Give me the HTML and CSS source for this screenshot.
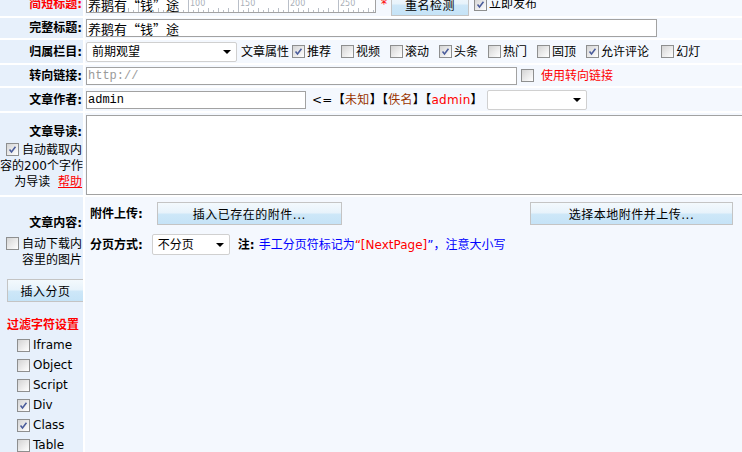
FILE: index.html
```html
<!DOCTYPE html>
<html lang="zh-CN">
<head>
<meta charset="utf-8">
<title>文章编辑</title>
<link rel="stylesheet" href="styles.css">
</head>
<body>
<div class="form">
  <div class="row row-1">
    <div class="lab red">简短标题:</div>
    <div class="val">
      <div class="ruler-wrap">
        <svg class="ruler" width="288" height="17" viewBox="0 0 288 17">
          <g stroke="#b9bfc8" stroke-width="1">
            <path d="M11.5 13v4M21.5 13v4M31.5 13v4M41.5 13v4M61.5 13v4M71.5 13v4M81.5 13v4M91.5 13v4M111.5 13v4M121.5 13v4M131.5 13v4M141.5 13v4M161.5 13v4M171.5 13v4M181.5 13v4M191.5 13v4M211.5 13v4M221.5 13v4M231.5 13v4M241.5 13v4M261.5 13v4M271.5 13v4M281.5 13v4"/>
            <path d="M6.5 15v2M16.5 15v2M26.5 15v2M36.5 15v2M46.5 15v2M56.5 15v2M66.5 15v2M76.5 15v2M86.5 15v2M96.5 15v2M106.5 15v2M116.5 15v2M126.5 15v2M136.5 15v2M146.5 15v2M156.5 15v2M166.5 15v2M176.5 15v2M186.5 15v2M196.5 15v2M206.5 15v2M216.5 15v2M226.5 15v2M236.5 15v2M246.5 15v2M256.5 15v2M266.5 15v2M276.5 15v2M286.5 15v2"/>
            <path d="M51.5 4v13M101.5 0v17M151.5 0v17M201.5 0v17M251.5 0v17"/>
          </g>
          <g fill="#a9afb8" font-family="DejaVu Sans, sans-serif" font-size="8">
            <text x="103" y="11">100</text>
            <text x="153" y="11">150</text>
            <text x="203" y="11">200</text>
            <text x="253" y="11">250</text>
          </g>
        </svg>
        <input class="txt big ruler-input" type="text" value="养鹅有“钱”途">
      </div>
      <span class="star">*</span>
      <button class="btn btn-check">重名检测</button>
      <span class="cb on ml5"><svg viewBox="0 0 13 13"><path d="M3 6.5l2.3 3L10 3.2"/></svg></span>
      <span class="ml2">立即发布</span>
    </div>
  </div>

  <div class="row row-2">
    <div class="lab">完整标题:</div>
    <div class="val">
      <input class="txt big w-full" type="text" value="养鹅有“钱”途">
    </div>
  </div>

  <div class="row row-3">
    <div class="lab">归属栏目:</div>
    <div class="val">
      <div class="sel w-col"><span>前期观望</span><i class="arrow"></i></div>
      <span class="ml4">文章属性</span>
      <span class="cb on ml3"><svg viewBox="0 0 13 13"><path d="M3 6.5l2.3 3L10 3.2"/></svg></span><span class="ml2">推荐</span>
      <span class="cb ml10"></span><span class="ml2">视频</span>
      <span class="cb ml10"></span><span class="ml2">滚动</span>
      <span class="cb on ml10"><svg viewBox="0 0 13 13"><path d="M3 6.5l2.3 3L10 3.2"/></svg></span><span class="ml2">头条</span>
      <span class="cb ml10"></span><span class="ml2">热门</span>
      <span class="cb ml10"></span><span class="ml2">固顶</span>
      <span class="cb on ml10"><svg viewBox="0 0 13 13"><path d="M3 6.5l2.3 3L10 3.2"/></svg></span><span class="ml2">允许评论</span>
      <span class="cb ml12"></span><span class="ml2">幻灯</span>
    </div>
  </div>

  <div class="row row-4">
    <div class="lab">转向链接:</div>
    <div class="val">
      <input class="txt mono gray w-link" type="text" value="http://">
      <span class="cb ml4"></span>
      <span class="red ml7">使用转向链接</span>
    </div>
  </div>

  <div class="row row-5">
    <div class="lab">文章作者:</div>
    <div class="val">
      <input class="txt mono w-author" type="text" value="admin">
      <span class="authors ml6">&lt;=<span class="bold">【</span><span class="brown">未知</span><span class="bold">】【</span><span class="brown">佚名</span><span class="bold">】【</span><span class="red">admin</span><span class="bold">】</span></span>
      <div class="sel w-auth ml4"><span></span><i class="arrow"></i></div>
    </div>
  </div>

  <div class="row row-6">
    <div class="lab lab-top intro">
      <div class="lt">文章导读:</div>
      <div class="para"><span class="cb on mr3"><svg viewBox="0 0 13 13"><path d="M3 6.5l2.3 3L10 3.2"/></svg></span>自动截取内<br>容的200个字作<br>为导读&nbsp;&nbsp;<a class="help" href="#">帮助</a></div>
    </div>
    <div class="val val-top">
      <div class="area"></div>
    </div>
  </div>

  <div class="row row-7">
    <div class="lab lab-top editor-lab">
      <div class="lt">文章内容:</div>
      <div class="para"><span class="cb mr3"></span>自动下载内<br>容里的图片</div>
      <button class="btn btn-page">插入分页</button>
      <div class="filter-title">过滤字符设置</div>
      <ul class="filters">
        <li><span class="cb"></span>Iframe</li>
        <li><span class="cb"></span>Object</li>
        <li><span class="cb"></span>Script</li>
        <li><span class="cb on"><svg viewBox="0 0 13 13"><path d="M3 6.5l2.3 3L10 3.2"/></svg></span>Div</li>
        <li><span class="cb on"><svg viewBox="0 0 13 13"><path d="M3 6.5l2.3 3L10 3.2"/></svg></span>Class</li>
        <li><span class="cb"></span>Table</li>
      </ul>
    </div>
    <div class="val val-top editor">
      <div class="line-a">
        <div class="grp">
          <span class="bold">附件上传:</span>
          <button class="btn btn-exist">插入已存在的附件...</button>
        </div>
        <button class="btn btn-local">选择本地附件并上传...</button>
      </div>
      <div class="line-b">
        <span class="bold">分页方式:</span>
        <div class="sel w-page"><span>不分页</span><i class="arrow"></i></div>
        <span class="bold ml8">注:</span>
        <span class="blue ml4">手工分页符标记为<span class="red">“[NextPage]</span>”，注意大小写</span>
      </div>
    </div>
  </div>
</div>
</body>
</html>
```

FILE: styles.css
```css
html, body {
  margin: 0;
  padding: 0;
  background: #ffffff;
  overflow: hidden;
}
body {
  font-family: "DejaVu Sans", "Noto Sans CJK SC", sans-serif;
  font-size: 12px;
  line-height: 16px;
  color: #000;
  width: 742px;
  height: 452px;
}
.form {
  display: flex;
  flex-direction: column;
  gap: 2px;
  width: 742px;
  margin-top: -8px;
  background: #ffffff;
}
.row {
  display: flex;
  gap: 2px;
  flex: none;
}
.row-1 { height: 24px; }
.row-2 { height: 20px; }
.row-3 { height: 23px; }
.row-4 { height: 21px; }
.row-5 { height: 23px; }
.row-6 { height: 82px; }
.row-7 { height: 263px; }

.lab {
  width: 83px;
  flex: none;
  box-sizing: border-box;
  background: #e7f0fb;
  display: flex;
  align-items: center;
  justify-content: flex-end;
  padding-right: 1px;
  font-weight: bold;
  white-space: nowrap;
  overflow: hidden;
}
.val {
  flex: 1;
  min-width: 0;
  background: #f4f8fe;
  display: flex;
  align-items: center;
  padding-left: 1px;
  white-space: nowrap;
  overflow: hidden;
}
.lab-top {
  display: block;
  text-align: right;
  font-weight: normal;
}
.val-top {
  align-items: flex-start;
}
.lt { font-weight: bold; }
.bold { font-weight: bold; }
.red { color: #ff0000; }
.lab.red { color: #ff0000; }
.brown { color: #993300; }
.blue { color: #0000ff; font-weight: normal; }
.authors { letter-spacing: 0.3px; }
.ml2 { margin-left: 2px; }
.ml3 { margin-left: 3px; }
.ml4 { margin-left: 4px; }
.ml5 { margin-left: 5px; }
.ml6 { margin-left: 6px; }
.ml7 { margin-left: 7px; }
.ml8 { margin-left: 8px; }
.ml10 { margin-left: 10px; }
.ml12 { margin-left: 12px; }
.mr3 { margin-right: 3px; }

/* text inputs */
.txt {
  box-sizing: border-box;
  height: 18px;
  border: 1px solid #a2a2a2;
  background: #ffffff;
  padding: 0 1px;
  margin: 0;
  outline: none;
  color: #000;
  flex: none;
}
.big {
  font-family: "Noto Sans CJK SC", sans-serif;
  font-size: 13px;
}
.mono {
  font-family: "Liberation Mono", monospace;
  font-size: 12px;
}
.gray { color: #9a9a9a; }
.w-full { width: 571px; }
.w-link { width: 431px; }
.w-author { width: 220px; }

.ruler-wrap {
  position: relative;
  width: 290px;
  height: 18px;
  background: #ffffff;
  flex: none;
}
.ruler {
  position: absolute;
  left: 1px;
  top: 0;
}
.ruler-input {
  position: relative;
  width: 290px;
  background: transparent;
}
.star {
  color: #ff0000;
  margin-left: 5px;
  width: 8px;
}

/* checkbox */
.cb {
  display: inline-block;
  box-sizing: border-box;
  width: 13px;
  height: 13px;
  border: 1px solid #8e8f8f;
  background: linear-gradient(135deg, #d4d4d4 0%, #ececec 55%, #ffffff 100%);
  vertical-align: -2px;
  flex: none;
}
.cb svg {
  display: block;
  width: 11px;
  height: 11px;
}
.cb svg path {
  fill: none;
  stroke: #4a5c9b;
  stroke-width: 1.8;
}

/* buttons */
.btn {
  box-sizing: border-box;
  height: 23px;
  border: 1px solid #c4c4c4;
  background: linear-gradient(#f3f9fd 0%, #e8f3fb 45%, #cde7f8 55%, #c5e3f7 100%);
  font-family: "DejaVu Sans", "Noto Sans CJK SC", sans-serif;
  font-size: 12px;
  font-weight: normal;
  color: #000;
  padding: 0;
  margin: 0;
  letter-spacing: 0.5px;
  flex: none;
}
.btn-check { width: 78px; margin-left: 2px; }
.btn-exist { width: 185px; margin-left: 14px; }
.btn-local { width: 203px; }
.btn-page { width: 77px; margin: 11px 0 0 7px; display: block; }

/* selects */
.sel {
  box-sizing: border-box;
  height: 20px;
  border: 1px solid #d0d0d0;
  border-radius: 2px;
  background: #ffffff;
  display: flex;
  align-items: center;
  justify-content: space-between;
  padding: 0 5px 0 5px;
  flex: none;
  font-weight: normal;
}
.arrow {
  width: 0;
  height: 0;
  border-left: 4px solid transparent;
  border-right: 4px solid transparent;
  border-top: 4px solid #000;
}
.w-col { width: 151px; }
.w-auth { width: 100px; height: 20px; }
.w-page { width: 78px; height: 21px; }

/* textarea look-alike */
.area {
  box-sizing: border-box;
  width: 680px;
  height: 80px;
  margin: 2px 0 0 0;
  border: 1px solid #a2a2a2;
  background: #fff;
  flex: none;
}

/* left labels of tall rows */
.intro { padding-top: 11px; }
.intro .para { margin-top: 2px; }
.editor-lab { padding-top: 18px; }
.editor-lab .para { margin-top: 5px; }
.help {
  color: #ff0000;
  text-decoration: underline;
}
.filter-title {
  color: #ff0000;
  font-weight: bold;
  text-align: center;
  margin-top: 15px;
  padding-left: 4px;
}
.filters {
  list-style: none;
  margin: 2px 0 0 0;
  padding: 0 0 0 17px;
  text-align: left;
}
.filters li {
  height: 20px;
  display: flex;
  align-items: center;
}
.filters .cb { margin-right: 3px; }

/* content area */
.editor {
  display: block;
  padding: 5px 9px 0 5px;
}
.line-a {
  display: flex;
  justify-content: space-between;
  align-items: center;
}
.grp {
  display: flex;
  align-items: center;
}
.line-b {
  display: flex;
  align-items: center;
  margin-top: 9px;
}
.line-b .sel { margin-left: 9px; }
```
